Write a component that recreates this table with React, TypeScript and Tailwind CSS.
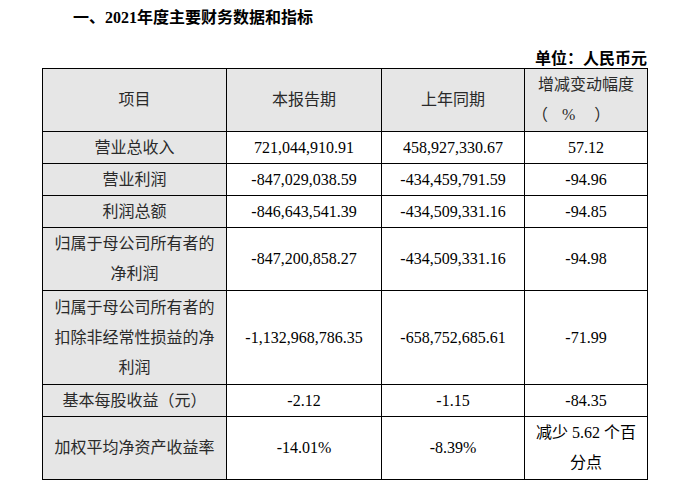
const font = "font-['Liberation_Serif','Noto_Sans_CJK_SC',serif]";

type Row = { label: string[]; cur: string; prev: string; change: string[]; h: string };

const rows: Row[] = [
  { label: ["营业总收入"], cur: "721,044,910.91", prev: "458,927,330.67", change: ["57.12"], h: "h-[32px]" },
  { label: ["营业利润"], cur: "-847,029,038.59", prev: "-434,459,791.59", change: ["-94.96"], h: "h-[32px]" },
  { label: ["利润总额"], cur: "-846,643,541.39", prev: "-434,509,331.16", change: ["-94.85"], h: "h-[32px]" },
  { label: ["归属于母公司所有者的", "净利润"], cur: "-847,200,858.27", prev: "-434,509,331.16", change: ["-94.98"], h: "h-[63px]" },
  {
    label: ["归属于母公司所有者的", "扣除非经常性损益的净", "利润"],
    cur: "-1,132,968,786.35",
    prev: "-658,752,685.61",
    change: ["-71.99"],
    h: "h-[94px]",
  },
  { label: ["基本每股收益（元）"], cur: "-2.12", prev: "-1.15", change: ["-84.35"], h: "h-[32px]" },
  { label: ["加权平均净资产收益率"], cur: "-14.01%", prev: "-8.39%", change: ["减少 5.62 个百", "分点"], h: "h-[63px]" },
];

const Lines = ({ lines }: { lines: string[] }) => (
  <>
    {lines.map((l) => (
      <div key={l}>{l}</div>
    ))}
  </>
);

export default function App() {
  return (
    <div className={`w-[675px] h-[481px] bg-white text-black overflow-hidden ${font}`}>
      <h1 className="pl-[73px] pt-[8px] text-[16px] leading-[20px] font-bold">一、2021年度主要财务数据和指标</h1>
      <div className="w-[647px] text-right text-[16px] leading-[20px] font-bold mt-[21px]">单位：人民币元</div>
      <table className="ml-[42px] mt-[-1px] border-collapse table-fixed w-[605px] text-[16px] leading-[30px] text-center">
        <colgroup>
          <col className="w-[184px]" />
          <col className="w-[155px]" />
          <col className="w-[143px]" />
          <col className="w-[123px]" />
        </colgroup>
        <thead>
          <tr className="h-[63px] bg-[#e6e6e6] text-[#2a2a2a]">
            <th className="border border-black font-normal p-0">项目</th>
            <th className="border border-black font-normal p-0">本报告期</th>
            <th className="border border-black font-normal p-0">上年同期</th>
            <th className="border border-black font-normal p-0">
              <div>增减变动幅度</div>
              <div className="flex pl-[7px]">
                <span>（</span>
                <span className="ml-[14px]">%</span>
                <span className="ml-[19px]">）</span>
              </div>
            </th>
          </tr>
        </thead>
        <tbody>
          {rows.map((r) => (
            <tr key={r.label.join("")} className={r.h}>
              <td className="border border-black bg-[#e6e6e6] text-[#2a2a2a] p-0">
                <Lines lines={r.label} />
              </td>
              <td className="border border-black p-0">{r.cur}</td>
              <td className="border border-black p-0">{r.prev}</td>
              <td className="border border-black p-0">
                <Lines lines={r.change} />
              </td>
            </tr>
          ))}
        </tbody>
      </table>
    </div>
  );
}
